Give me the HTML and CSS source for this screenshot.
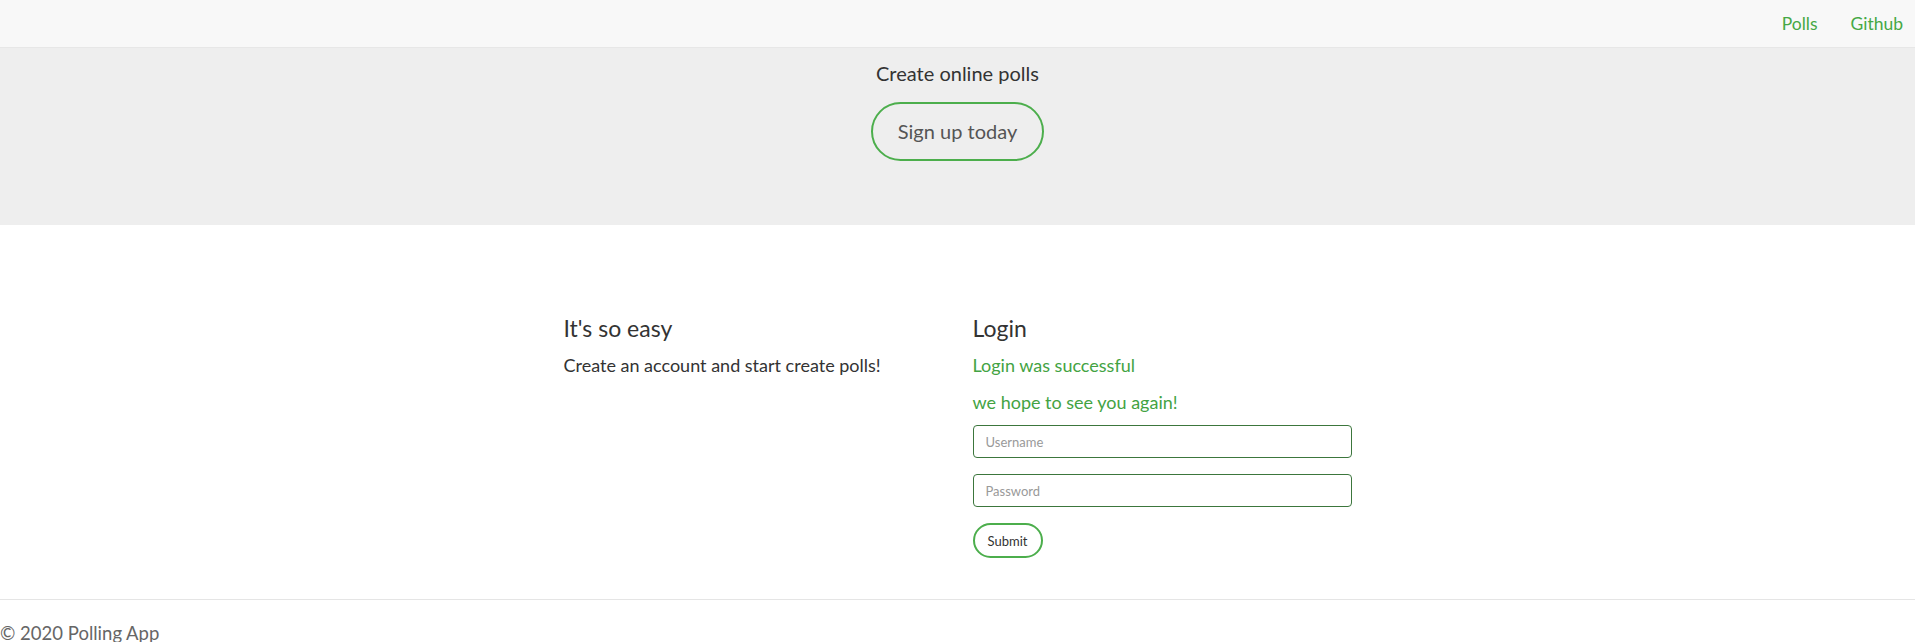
FILE: index.html
```html
<!DOCTYPE html>
<html lang="en">
<head>
<meta charset="utf-8">
<title>Polling App</title>
<link rel="stylesheet" href="styles.css">
</head>
<body>
<nav class="navbar">
  <a class="nav-link" href="#">Polls</a>
  <a class="nav-link" href="#">Github</a>
</nav>
<header class="jumbotron">
  <p class="lead">Create online polls</p>
  <a class="btn-signup" href="#">Sign up today</a>
</header>
<main class="content">
  <section class="col">
    <h3 class="col-title">It's so easy</h3>
    <p class="text">Create an account and start create polls!</p>
  </section>
  <section class="col">
    <h3 class="col-title">Login</h3>
    <p class="text success">Login was successful</p>
    <p class="text success">we hope to see you again!</p>
    <form class="login-form">
      <input class="field" type="text" placeholder="Username">
      <input class="field" type="password" placeholder="Password">
      <button class="btn-submit" type="button">Submit</button>
    </form>
  </section>
</main>
<footer class="footer">
  <p class="copy">© 2020 Polling App</p>
</footer>
</body>
</html>
```
FILE: styles.css
```css
* { box-sizing: border-box; }
html, body { margin: 0; padding: 0; }
body {
  font-family: Lato, "Open Sans", sans-serif;
  color: #333;
  background: #fff;
}
.navbar {
  height: 48px;
  background: #f8f8f8;
  border-bottom: 1px solid #e7e7e7;
  display: flex;
  justify-content: flex-end;
  gap: 33px;
  padding-right: 12px;
}
.nav-link {
  font-size: 17.5px;
  line-height: 47px;
  color: #45a845;
  text-decoration: none;
}
.jumbotron {
  background: #eee;
  display: flex;
  flex-direction: column;
  align-items: center;
  padding: 13px 0 64px;
}
.lead {
  margin: 0;
  font-size: 20px;
  line-height: 24px;
  color: #333;
}
.btn-signup {
  margin-top: 17px;
  height: 59px;
  width: 173px;
  border: 2px solid #4cae4c;
  border-radius: 30px;
  font-size: 20px;
  line-height: 55px;
  text-align: center;
  color: #555;
  text-decoration: none;
}
.content {
  width: 818px;
  margin: 89px auto 0;
  display: flex;
}
.col {
  width: 409px;
  padding: 0 15px;
}
.col-title {
  margin: 0 0 12px;
  font-size: 23px;
  line-height: 28px;
  font-weight: 400;
  color: #333;
}
.text {
  margin: 0 0 15px;
  font-size: 18px;
  line-height: 22px;
}
.success { color: #43a343; }
.login-form {
  display: flex;
  flex-direction: column;
  align-items: flex-start;
  gap: 16px;
  margin-top: -3px;
}
.field {
  width: 379px;
  height: 33px;
  border: 1px solid #3c763d;
  border-radius: 4px;
  padding: 0 12px;
  font-family: inherit;
  font-size: 13px;
  color: #555;
  background: #fff;
}
.field::placeholder { color: #999; }
.btn-submit {
  width: 70px;
  height: 35px;
  border: 2px solid #4cae4c;
  border-radius: 18px;
  background: #fff;
  font-family: inherit;
  font-size: 13px;
  color: #333;
  padding: 0;
}
.footer {
  margin-top: 41px;
  border-top: 1px solid #e5e5e5;
  padding-top: 22px;
}
.copy {
  margin: 0;
  font-size: 18.5px;
  line-height: 22px;
  color: #666;
}
```
